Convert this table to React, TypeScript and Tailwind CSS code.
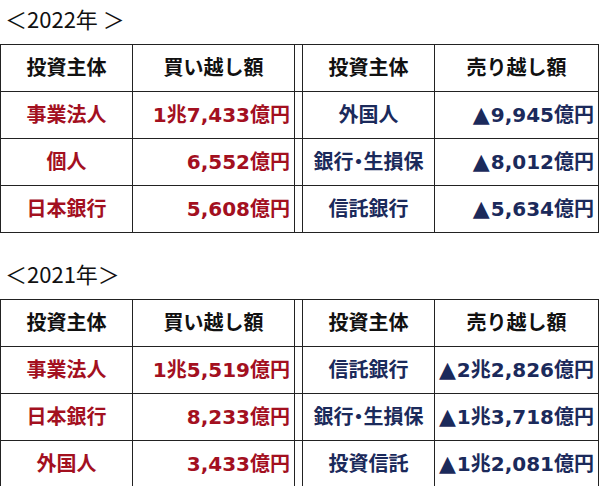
const RED = 'text-[#a3101f]';
const NAVY = 'text-[#1b2a5b]';

type Row = [string, string, string, string];

const DATA: { title: string; rows: Row[] }[] = [
  {
    title: '＜2022年 ＞',
    rows: [
      ['事業法人', '1兆7,433億円', '外国人', '▲9,945億円'],
      ['個人', '6,552億円', '銀行・生損保', '▲8,012億円'],
      ['日本銀行', '5,608億円', '信託銀行', '▲5,634億円'],
    ],
  },
  {
    title: '＜2021年＞',
    rows: [
      ['事業法人', '1兆5,519億円', '信託銀行', '▲2兆2,826億円'],
      ['日本銀行', '8,233億円', '銀行・生損保', '▲1兆3,718億円'],
      ['外国人', '3,433億円', '投資信託', '▲1兆2,081億円'],
    ],
  },
];

const cell = 'h-[47px] border-r border-b border-[#222] flex items-center';

// selling amounts carry a leading triangle, drawn a touch larger
function Amount({ v }: { v: string }) {
  if (!v.startsWith('▲')) return <>{v}</>;
  return (
    <>
      <span className="text-[22px] mr-[1px]">▲</span>
      {v.slice(1)}
    </>
  );
}

function Table({ rows }: { rows: Row[] }) {
  return (
    <div className="grid grid-cols-[132px_162px_8px_132px_164px] border-t border-l border-[#222] w-[599px]">
      <div className={`${cell} justify-center`}>投資主体</div>
      <div className={`${cell} justify-center`}>買い越し額</div>
      <div className={cell} />
      <div className={`${cell} justify-center`}>投資主体</div>
      <div className={`${cell} justify-center`}>売り越し額</div>
      {rows.map((r, i) => [
        <div key={`a${i}`} className={`${cell} justify-center ${RED}`}>{r[0]}</div>,
        <div key={`b${i}`} className={`${cell} justify-end pr-[4px] ${RED}`}>{r[1]}</div>,
        <div key={`g${i}`} className={cell} />,
        <div key={`c${i}`} className={`${cell} justify-center ${NAVY} [font-feature-settings:'palt']`}>
          {r[2]}
        </div>,
        <div key={`d${i}`} className={`${cell} justify-end pr-[4px] ${NAVY}`}>
          <Amount v={r[3]} />
        </div>,
      ])}
    </div>
  );
}

export default function App() {
  return (
    <div className="w-[600px] h-[486px] bg-white overflow-hidden text-[#111]">
      {DATA.map((s, i) => (
        <section key={s.title} className={i === 0 ? '' : 'mt-[22px]'}>
          <h2
            className="h-[44px] pl-[5px] pt-[3px] text-[22px] font-normal leading-[30px]"
            style={{ fontFamily: '"Noto Sans CJK JP", sans-serif' }}
          >
            {s.title}
          </h2>
          <div
            className="text-[20px] font-bold leading-none"
            style={{ fontFamily: '"DejaVu Sans", "Noto Sans CJK JP", sans-serif' }}
          >
            <Table rows={s.rows} />
          </div>
        </section>
      ))}
    </div>
  );
}
